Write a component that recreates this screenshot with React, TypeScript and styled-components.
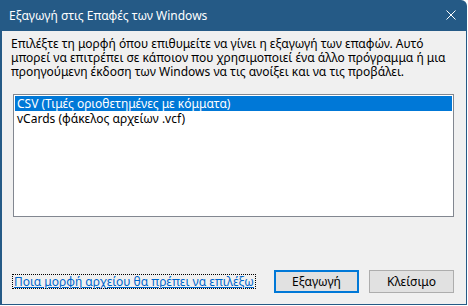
import React from "react";
import styled, { createGlobalStyle } from "styled-components";

const GlobalStyle = createGlobalStyle`
  html, body {
    margin: 0;
    padding: 0;
    background: #ffffff;
  }
  * {
    box-sizing: border-box;
  }
`;

const Window = styled.div`
  width: 467px;
  height: 305px;
  display: flex;
  flex-direction: column;
  font-family: "Noto Sans", "Open Sans", sans-serif;
  font-size: 12px;
  color: #000;
  border-top-right-radius: 6px;
  overflow: hidden;
`;

const TitleBar = styled.div`
  height: 31px;
  flex: none;
  background: #255a86;
  color: #fff;
  display: flex;
  align-items: center;
  padding: 0 0 1px 9px;
`;

const Title = styled.span`
  flex: 1;
  font-size: 12px;
`;

const CloseButton = styled.div`
  width: 30px;
  height: 30px;
  margin-right: 1px;
  display: flex;
  align-items: center;
  justify-content: center;
`;

const Body = styled.div`
  flex: 1;
  background: #f0f0f0;
  border: 1px solid #255a86;
  border-top: none;
  border-left-width: 2px;
  display: flex;
  flex-direction: column;
  padding: 6px 12px 11px 9px;
`;

const Intro = styled.div`
  line-height: 14.2px;
  white-space: nowrap;
`;

const ListBox = styled.div`
  margin: 14px 0 0 2px;
  height: 123px;
  border: 1px solid #828790;
  background: #fff;
  padding: 1px;
`;

const ListItem = styled.div<{ $selected?: boolean }>`
  height: 15px;
  line-height: 15px;
  padding-left: 2px;
  white-space: nowrap;
  background: ${(p) => (p.$selected ? "#0078d7" : "transparent")};
  color: ${(p) => (p.$selected ? "#fff" : "#000")};
`;

const Footer = styled.div`
  margin-top: auto;
  margin-left: 2px;
  display: flex;
  align-items: center;
`;

const HelpLink = styled.a`
  color: #0066cc;
  text-decoration: underline;
  outline: 1px dotted #000;
  outline-offset: 0;
  padding: 0 1px;
  line-height: 13px;
  margin-right: auto;
  white-space: nowrap;
  cursor: pointer;
`;

const Button = styled.button<{ $default?: boolean }>`
  width: 85px;
  height: 23px;
  margin-left: 10px;
  font-family: inherit;
  font-size: 12px;
  color: #000;
  background: #e1e1e1;
  border: ${(p) => (p.$default ? "2px solid #0078d7" : "1px solid #adadad")};
  padding: 0;
`;

export default function App() {
  return (
    <>
      <GlobalStyle />
      <Window>
        <TitleBar>
          <Title>Εξαγωγή στις Επαφές των Windows</Title>
          <CloseButton>
            <svg width="10" height="10" viewBox="0 0 10 10">
              <path d="M0.5 0.5 L9.5 9.5 M9.5 0.5 L0.5 9.5" stroke="#fff" strokeWidth="1" />
            </svg>
          </CloseButton>
        </TitleBar>
        <Body>
          <Intro>
            <div>Επιλέξτε τη μορφή όπου επιθυμείτε να γίνει η εξαγωγή των επαφών. Αυτό</div>
            <div>μπορεί να επιτρέπει σε κάποιον που χρησιμοποιεί ένα άλλο πρόγραμμα ή μια</div>
            <div>προηγούμενη έκδοση των Windows να τις ανοίξει και να τις προβάλει.</div>
          </Intro>
          <ListBox>
            <ListItem $selected>CSV (Τιμές οριοθετημένες με κόμματα)</ListItem>
            <ListItem>vCards (φάκελος αρχείων .vcf)</ListItem>
          </ListBox>
          <Footer>
            <HelpLink>Ποια μορφή αρχείου θα πρέπει να επιλέξω</HelpLink>
            <Button $default>Εξαγωγή</Button>
            <Button>Κλείσιμο</Button>
          </Footer>
        </Body>
      </Window>
    </>
  );
}
